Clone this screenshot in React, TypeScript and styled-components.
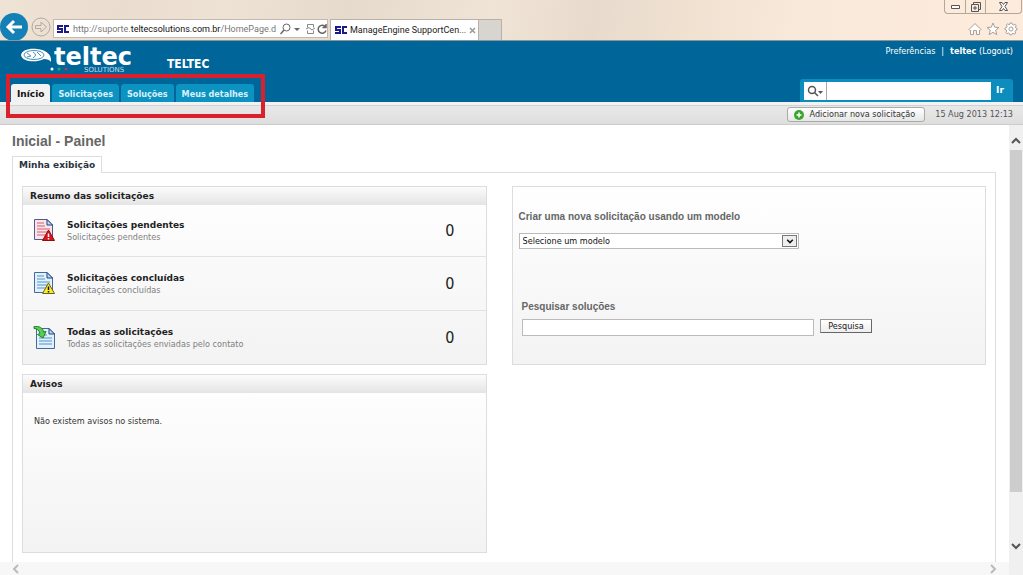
import React from "react";
import styled, { createGlobalStyle, css } from "styled-components";

const verdana = `"DejaVu Sans", Verdana, sans-serif`;
const tahoma = `"DejaVu Sans Condensed", "DejaVu Sans", Tahoma, sans-serif`;
const arial = `"Liberation Sans", Arial, sans-serif`;
const segoe = `Roboto, "Segoe UI", sans-serif`;

const GlobalStyle = createGlobalStyle`
  *, *::before, *::after { box-sizing: border-box; }
  html, body, #root { height: 100%; }
  body { margin: 0; background: #fff; color: #333; font-family: ${verdana}; font-size: 9px; overflow: hidden; }
  button, input, select { font: inherit; color: inherit; margin: 0; padding: 0; border-radius: 0; }
  button { background: none; border: 0; cursor: pointer; }
  a { color: inherit; text-decoration: none; }
  h1, h2, h3, p, ul { margin: 0; padding: 0; }
  ul { list-style: none; }
  svg { display: block; flex: none; }
`;

const Window = styled.div`
  display: flex;
  flex-direction: column;
  height: 100vh;
`;

/* Browser chrome */
const Chrome = styled.header`
  display: flex;
  justify-content: space-between;
  height: 41px;
  flex: none;
  border-bottom: 1px solid #8a9496;
  background: linear-gradient(100deg, #efe3d6 0%, #eaddcf 12%, #eee2d5 22%, #e6dacd 34%, #f0e4d6 48%, #e8dbce 58%, #efe0d0 66%, #f9e9da 78%, #fdecdc 100%);
`;

const ChromeLeft = styled.div`
  display: flex;
  align-items: flex-end;
  min-width: 0;
`;

const NavButtons = styled.div`
  display: flex;
  align-items: center;
  gap: 3px;
  height: 27px;
  width: 53px;
`;

const AddressBar = styled.form`
  display: flex;
  align-items: center;
  gap: 4px;
  width: 275px;
  height: 19px;
  margin-bottom: 2px;
  padding: 0 3px;
  background: #fff;
  border: 1px solid #c3b9ae;
  font: 9px ${segoe};
  color: #666;
`;

const Url = styled.a`
  flex: 1;
  white-space: nowrap;
  color: #777;
  b { font-weight: 400; color: #111; }
`;

const BrowserTab = styled.div`
  display: flex;
  align-items: center;
  gap: 3px;
  width: 149px;
  height: 21px;
  margin-left: 2px;
  padding: 0 4px;
  background: #fff;
  border: 1px solid #b9b0a6;
  border-bottom: 0;
  font: 9px ${segoe};
  color: #222;
  span { flex: 1; white-space: nowrap; }
`;

const NewTab = styled.button`
  width: 23px;
  height: 21px;
  background: #d8d4cf;
  border: 1px solid #b9b0a6;
  border-left: 0;
  border-bottom: 0;
`;

const ChromeRight = styled.div`
  display: flex;
  flex-direction: column;
  justify-content: space-between;
  align-items: flex-end;
  padding: 0 1px 4px 0;
`;

const WindowControls = styled.div`
  display: flex;
  height: 14px;
  border: 1px solid #b3a79c;
  border-top: 0;
  border-radius: 0 0 4px 4px;
`;

const WindowButton = styled.button<{ $w: number }>`
  display: flex;
  align-items: center;
  justify-content: center;
  width: ${(p) => p.$w}px;
  & + & { border-left: 1px solid #b3a79c; }
`;

const ChromeTools = styled.div`
  display: flex;
  gap: 4px;
  padding-right: 4px;
`;

/* Site header */
const SiteHeader = styled.div`
  display: flex;
  justify-content: space-between;
  flex: none;
  height: 61px;
  background: #006699;
  color: #fff;
`;

const HeaderSide = styled.div<{ $end?: boolean }>`
  display: flex;
  flex-direction: column;
  justify-content: space-between;
  align-items: flex-start;
  ${(p) => p.$end && css`align-items: flex-end; padding-right: 10px;`}
`;

const Brand = styled.div`
  display: flex;
  align-items: flex-start;
  gap: 25px;
  padding: 6px 0 0 20px;
`;

const Company = styled.span`
  padding-top: 10px;
  font: bold 12px/14px ${tahoma};
`;

const Nav = styled.nav`
  position: relative;
  padding-left: 11px;
`;

const TabList = styled.ul`
  display: flex;
  gap: 2px;
`;

const NavTab = styled.a<{ $active?: boolean }>`
  display: block;
  height: 18px;
  padding: 0 6px;
  border-radius: 3px 3px 0 0;
  font: bold 9px/20px ${(p) => (p.$active ? verdana : tahoma)};
  background: ${(p) => (p.$active ? "#f2f2f2" : "#0c93c1")};
  color: ${(p) => (p.$active ? "#111" : "#d9f1fa")};
`;

const Highlight = styled.div`
  position: absolute;
  left: 6px;
  right: -11px;
  top: -10px;
  bottom: -16px;
  border: 4px solid #da1f2d;
  pointer-events: none;
`;

const UserLinks = styled.div`
  display: flex;
  gap: 6px;
  padding-top: 5px;
  font: 9px/11px ${tahoma};
`;

const SearchPanel = styled.form`
  display: flex;
  align-items: flex-start;
  height: 23px;
  width: 213px;
  padding: 3px 0 0 4px;
  background: #0c8dbd;
  border-radius: 3px 3px 0 0;
`;

const SearchKind = styled.button`
  display: flex;
  align-items: center;
  justify-content: center;
  width: 23px;
  height: 18px;
  background: #fff;
  border-right: 1px solid #aaa;
`;

const HeaderInput = styled.input`
  flex: 1;
  min-width: 0;
  height: 18px;
  border: 0;
  background: #fff;
`;

const GoButton = styled.button`
  width: 18px;
  height: 16px;
  margin-right: 4px;
  font: bold 9px/16px ${verdana};
  color: #fff;
`;

const Toolbar = styled.div`
  display: flex;
  align-items: center;
  justify-content: flex-end;
  gap: 10px;
  flex: none;
  height: 23px;
  padding: 3px 10px 0 0;
  border-bottom: 1px solid #ccc;
  background: linear-gradient(#f2f2f2 0 3px, #d2d2d2 3px 4px, #e8e8e8 4px, #dedede);
  font: 9px/11px ${tahoma};
  color: #555;
`;

const AddButton = styled.button`
  display: flex;
  align-items: center;
  gap: 6px;
  height: 15px;
  padding: 0 9px 0 6px;
  border: 1px solid #aaa;
  border-radius: 3px;
  background: linear-gradient(#fff, #e6e6e6);
  color: #333;
`;

/* Scrolling page area */
const Viewport = styled.div`
  display: flex;
  flex: 1;
  min-height: 0;
`;

const PageColumn = styled.div`
  display: flex;
  flex-direction: column;
  flex: 1;
  min-width: 0;
`;

const Page = styled.main`
  display: flex;
  flex-direction: column;
  flex: 1;
  min-height: 0;
  overflow: hidden;
  padding: 8px 13px 0 12px;
`;

const PageTitle = styled.h1`
  font: bold 14px/16px ${arial};
  color: #666;
`;

const ViewTab = styled.button`
  align-self: flex-start;
  position: relative;
  height: 17px;
  margin: 7px 0 -1px;
  padding: 0 6px;
  flex: none;
  border: 1px solid #ddd;
  border-bottom: 0;
  background: #fff;
  font: bold 9px/15px ${verdana};
  color: #2b3440;
`;

const Board = styled.div`
  display: flex;
  gap: 25px;
  align-items: flex-start;
  flex: 1 0 auto;
  padding: 13px 9px 9px;
  border: 1px solid #ddd;
  border-bottom: 0;
`;

const Column = styled.div<{ $grow: number }>`
  display: flex;
  flex-direction: column;
  gap: 9px;
  flex: ${(p) => p.$grow} 1 0;
  min-width: 0;
`;

const Card = styled.section`
  border: 1px solid #ddd;
  background: linear-gradient(#fff, #f3f3f3);
`;

const CardTitle = styled.h2`
  height: 18px;
  padding-left: 7px;
  background: linear-gradient(#fcfcfc, #e4e4e4);
  font: bold 9px/18px ${verdana};
  color: #222;
`;

const SummaryRow = styled.li`
  display: flex;
  align-items: center;
  gap: 10px;
  height: 51px;
  padding: 0 31px 0 10px;
  & + & { height: 54px; border-top: 1px solid #e2e2e2; }
`;

const SummaryText = styled.div`
  flex: 1;
  h3 { font: bold 9px/14px ${verdana}; color: #222; }
  p { font: 9px/11px ${tahoma}; color: #808080; }
`;

const Count = styled.span`
  font: 16px/18px ${tahoma};
  color: #222;
`;

const Notice = styled.p`
  height: 159px;
  padding: 22px 11px;
  font: 9px/12px ${tahoma};
  color: #333;
`;

const FormCard = styled(Card)`
  display: flex;
  flex-direction: column;
  height: 179px;
  padding: 23px 6px 0;
`;

const Field = styled.div<{ $inset?: boolean }>`
  display: flex;
  flex-direction: column;
  gap: 9px;
  ${(p) => p.$inset && css`gap: 5px; margin-top: 51px; padding-left: 3px;`}
  label { font: bold 10px/14px ${arial}; color: #666; }
`;

const SelectBox = styled.div`
  display: flex;
  align-items: center;
  width: 61%;
  height: 16px;
  padding-right: 1px;
  border: 1px solid #bbb;
  background: #fff;
`;

const Select = styled.select`
  flex: 1;
  height: 14px;
  padding-left: 3px;
  border: 0;
  background: transparent;
  appearance: none;
  font: 9px/14px ${tahoma};
  color: #111;
`;

const SelectArrow = styled.span`
  display: flex;
  align-items: center;
  justify-content: center;
  width: 15px;
  height: 12px;
  border: 1px solid #777;
  background: #eee;
`;

const InputRow = styled.div`
  display: flex;
  gap: 6px;
`;

const TextInput = styled.input`
  width: 64%;
  height: 17px;
  border: 1px solid #bbb;
  background: #fff;
`;

const SubmitButton = styled.button`
  height: 14px;
  padding: 0 7px;
  border: 1px solid #999;
  border-right-color: #666;
  border-bottom-color: #666;
  background: linear-gradient(#fff, #eee);
  font: 9px/12px ${tahoma};
  color: #222;
`;

const ScrollX = styled.div`
  display: flex;
  align-items: center;
  justify-content: space-between;
  flex: none;
  height: 13px;
  padding: 0 11px;
  background: #f7f7f7;
`;

const ScrollY = styled.div`
  display: flex;
  flex-direction: column;
  align-items: center;
  flex: none;
  width: 14px;
  padding: 11px 0 24px;
  gap: 4px;
  background: #f0f0f0;
`;

const Thumb = styled.div`
  width: 12px;
  flex: 1;
  margin-bottom: 45px;
  background: #cdcdcd;
`;

const Favicon = () => (
  <svg width="12" height="10" viewBox="0 0 12 10" fill="none" stroke="#1a1a8c" strokeWidth="2">
    <path d="M6 2H1V5H5V8H0M12 2H8V8H12" />
  </svg>
);

const Chevron = ({ d, color, size = 10 }: { d: string; color: string; size?: number }) => (
  <svg width={size} height={size} viewBox="0 0 10 10" fill="none" stroke={color} strokeWidth="2">
    <path d={d} />
  </svg>
);

const LogoArt = styled.svg`
  overflow: visible;
  text { font-family: ${verdana}; }
`;

const Logo = () => (
  <LogoArt width="122" height="26" viewBox="0 0 122 26" role="img" aria-label="teltec solutions">
    <path d="M1 8C2 3 9 1 17 2C26 3 32 7 31 15C30 13 27 12 24 12C16 16 2 15 1 8Z" fill="#fff" />
    <g fill="none" stroke="#4d94b8" strokeWidth="1">
      <ellipse cx="14" cy="8" rx="10" ry="4.500" />
      <path d="M7 6L11 9L7 10M13 5Q18 8 13 11M17 5L21 9" />
    </g>
    <text x="34" y="18" fill="#fff" fontSize="24" fontWeight="bold">teltec</text>
    <circle cx="32" cy="22" r="1.500" fill="#fff" />
    <circle cx="39" cy="22" r="1.500" fill="#2fa36b" />
    <circle cx="46" cy="22" r="1.500" fill="#a04060" />
    <text x="64" y="25" fill="#c4dfec" fontSize="7">SOLUTIONS</text>
  </LogoArt>
);

type DocKind = "error" | "warning" | "all";

const DocIcon = ({ kind }: { kind: DocKind }) => (
  <svg width="24" height="24" viewBox="0 0 24 24">
    <g transform={kind === "all" ? "translate(2 2)" : "translate(0 0)"}>
      <path
        d="M1.500 .5H14L19.500 6V20.500H1.500Z"
        fill={kind === "error" ? "#fbe4e8" : "#e4f1fc"}
        stroke={kind === "error" ? "#4d5c8c" : "#3f6c9c"}
      />
      <path d="M14 .5V6H19.500Z" fill="#b9dcf5" stroke="#23427c" />
      <path
        d="M4 4H11M4 7H12M4 10H17M4 13H17M4 16H17"
        stroke={kind === "error" ? "#e08a98" : "#7fb2dc"}
        strokeWidth="1.500"
      />
    </g>
    {kind === "error" && (
      <>
        <path d="M15.500 11L21.500 21.500H9.500Z" fill="#d8141c" stroke="#8e0b10" />
        <path d="M15.500 14.500V18M15.500 19V20.500" stroke="#fff" strokeWidth="1.500" />
      </>
    )}
    {kind === "warning" && (
      <>
        <path d="M15.500 11L21.500 21.500H9.500Z" fill="#ffe92e" stroke="#6c6414" />
        <path d="M15.500 14.500V18M15.500 19V20.500" stroke="#111" strokeWidth="1.500" />
      </>
    )}
    {kind === "all" && (
      <path d="M1 .5C6 0 10 1.500 10.500 6L13 5.500L10 12L4.500 8.500L7 7.500C6 4 4 2.500 1 2.500Z" fill="#5ccf52" stroke="#23802a" />
    )}
  </svg>
);

const summary: { kind: DocKind; title: string; note: string }[] = [
  { kind: "error", title: "Solicitações pendentes", note: "Solicitações pendentes" },
  { kind: "warning", title: "Solicitações concluídas", note: "Solicitações concluídas" },
  { kind: "all", title: "Todas as solicitações", note: "Todas as solicitações enviadas pelo contato" },
];

const tabs = ["Início", "Solicitações", "Soluções", "Meus detalhes"];

export default function App() {
  return (
    <Window>
      <GlobalStyle />
      <Chrome>
        <ChromeLeft>
          <NavButtons>
            <button aria-label="Voltar">
              <svg width="28" height="27" viewBox="0 0 28 27">
                <circle cx="14" cy="14" r="14" fill="#1580b6" />
                <path d="M22 14H8M14 8L8 14L14 20" fill="none" stroke="#fff" strokeWidth="3" />
              </svg>
            </button>
            <button aria-label="Avançar">
              <svg width="20" height="20" viewBox="0 0 20 20" fill="none" stroke="#b3a99f">
                <circle cx="10" cy="10" r="9" />
                <path d="M4.500 8.500H10V5L15.500 10L10 15V11.500H4.500Z" />
              </svg>
            </button>
          </NavButtons>
          <AddressBar>
            <Favicon />
            <Url href="#">http://suporte.<b>teltecsolutions.com.br</b>/HomePage.d</Url>
            <svg width="48" height="12" viewBox="0 0 48 12" fill="none" stroke="#666">
              <circle cx="6.500" cy="4.500" r="3.500" />
              <path d="M4 7L0.500 11" strokeWidth="1.500" />
              <path d="M14 5H20L17 8Z" fill="#666" stroke="none" />
              <path d="M27.500 4.500V1.500H33.500V4.500M27.500 7.500V10.500H33.500V7.500M26 6L29 4.500L32 7L35 5" stroke="#888" />
              <path d="M45.500 4A4 4 0 1 0 46 7.500M46 1V4.500H42.500" strokeWidth="1.500" />
            </svg>
          </AddressBar>
          <BrowserTab>
            <Favicon />
            <span>ManageEngine SupportCen...</span>
            <svg width="7" height="7" viewBox="0 0 7 7" stroke="#999" strokeWidth="1.500">
              <path d="M1 1L6 6M6 1L1 6" />
            </svg>
          </BrowserTab>
          <NewTab aria-label="Nova guia" />
        </ChromeLeft>
        <ChromeRight>
          <WindowControls>
            <WindowButton $w={20} aria-label="Minimizar">
              <svg width="9" height="4" viewBox="0 0 9 4" fill="#fff" stroke="#555"><path d="M.5 .5H8.500V3.500H.5Z" /></svg>
            </WindowButton>
            <WindowButton $w={20} aria-label="Restaurar">
              <svg width="10" height="10" viewBox="0 0 10 10" fill="none" stroke="#555"><path d="M2.500 2.500V.5H9.500V7.500H7.500M.5 2.500H7.500V9.500H.5ZM3 5H5V7H3Z" /></svg>
            </WindowButton>
            <WindowButton $w={36} aria-label="Fechar">
              <svg width="9" height="9" viewBox="0 0 9 9" fill="#fff" stroke="#555"><path d="M.5 .5H3L4.500 2.500L6 .5H8.500L6 4.500L8.500 8.500H6L4.500 6.500L3 8.500H.5L3 4.500Z" /></svg>
            </WindowButton>
          </WindowControls>
          <ChromeTools>
            <svg width="14" height="14" viewBox="0 0 14 14" fill="#fff" stroke="#aaa098"><path d="M1 7.500L7 1.500L13 7.500L12 8.500L11.500 8V12.500H8.500V8.500H5.500V12.500H2.500V8L2 8.500Z" /></svg>
            <svg width="14" height="14" viewBox="0 0 14 14" fill="#fff" stroke="#aaa098"><path d="M7 1L8.700 5.200L13 5.500L9.700 8.300L10.800 12.700L7 10.300L3.200 12.700L4.300 8.300L1 5.500L5.300 5.200Z" /></svg>
            <svg width="14" height="14" viewBox="0 0 14 14" fill="#fff" stroke="#aaa098">
              <path d="M6 1H8L8.500 2.600L9.800 3.100L11.200 2.300L12.200 3.700L11.400 5.100L11.800 6L13 6.500V8L11.500 8.500L11 9.800L11.800 11.200L10.300 12L9 11.400L8 11.800L7.500 13H6L5.500 11.500L4.200 11L2.800 11.700L1.900 10.400L2.600 9L2.300 8L1 7.500V6L2.500 5.500L3 4.200L2.300 2.800L3.700 1.900L5 2.700L5.600 2.500Z" />
              <circle cx="7" cy="7" r="2" />
            </svg>
          </ChromeTools>
        </ChromeRight>
      </Chrome>

      <SiteHeader>
        <HeaderSide>
          <Brand>
            <Logo />
            <Company>TELTEC</Company>
          </Brand>
          <Nav>
            <TabList>
              {tabs.map((t, i) => (
                <li key={t}><NavTab href="#" $active={i === 0}>{t}</NavTab></li>
              ))}
            </TabList>
            <Highlight />
          </Nav>
        </HeaderSide>
        <HeaderSide $end>
          <UserLinks>
            <a href="#">Preferências</a>
            <span>|</span>
            <a href="#"><b>teltec</b> (Logout)</a>
          </UserLinks>
          <SearchPanel>
            <SearchKind type="button" aria-label="Tipo de pesquisa">
              <svg width="16" height="12" viewBox="0 0 16 12" fill="none" stroke="#555" strokeWidth="1.500">
                <circle cx="5" cy="5" r="3.500" />
                <path d="M7.500 7.500L11 11" />
                <path d="M11 6H16L13.500 9Z" fill="#555" stroke="none" />
              </svg>
            </SearchKind>
            <HeaderInput type="text" aria-label="Pesquisar" />
            <GoButton type="button">Ir</GoButton>
          </SearchPanel>
        </HeaderSide>
      </SiteHeader>

      <Toolbar>
        <AddButton>
          <svg width="10" height="10" viewBox="0 0 10 10">
            <circle cx="5" cy="5" r="5" fill="#39a52c" />
            <path d="M5 2.500V7.500M2.500 5H7.500" stroke="#fff" strokeWidth="1.500" />
          </svg>
          Adicionar nova solicitação
        </AddButton>
        <span>15 Aug 2013 12:13</span>
      </Toolbar>

      <Viewport>
        <PageColumn>
          <Page>
            <PageTitle>Inicial - Painel</PageTitle>
            <ViewTab>Minha exibição</ViewTab>
            <Board>
              <Column $grow={465}>
                <Card>
                  <CardTitle>Resumo das solicitações</CardTitle>
                  <ul>
                    {summary.map((s) => (
                      <SummaryRow key={s.kind}>
                        <DocIcon kind={s.kind} />
                        <SummaryText>
                          <h3>{s.title}</h3>
                          <p>{s.note}</p>
                        </SummaryText>
                        <Count>0</Count>
                      </SummaryRow>
                    ))}
                  </ul>
                </Card>
                <Card>
                  <CardTitle>Avisos</CardTitle>
                  <Notice>Não existem avisos no sistema.</Notice>
                </Card>
              </Column>
              <Column $grow={475}>
                <FormCard>
                  <Field>
                    <label htmlFor="template">Criar uma nova solicitação usando um modelo</label>
                    <SelectBox>
                      <Select id="template"><option>Selecione um modelo</option></Select>
                      <SelectArrow><Chevron d="M1.500 3.500L5 7L8.500 3.500" color="#111" size={8} /></SelectArrow>
                    </SelectBox>
                  </Field>
                  <Field $inset>
                    <label htmlFor="solutions">Pesquisar soluções</label>
                    <InputRow>
                      <TextInput id="solutions" type="text" />
                      <SubmitButton>Pesquisa</SubmitButton>
                    </InputRow>
                  </Field>
                </FormCard>
              </Column>
            </Board>
          </Page>
          <ScrollX>
            <Chevron d="M7 1L3 5L7 9" color="#bbb" />
            <Chevron d="M3 1L7 5L3 9" color="#bbb" />
          </ScrollX>
        </PageColumn>
        <ScrollY>
          <Chevron d="M1 7L5 3L9 7" color="#555" />
          <Thumb />
          <Chevron d="M1 3L5 7L9 3" color="#555" />
        </ScrollY>
      </Viewport>
    </Window>
  );
}
